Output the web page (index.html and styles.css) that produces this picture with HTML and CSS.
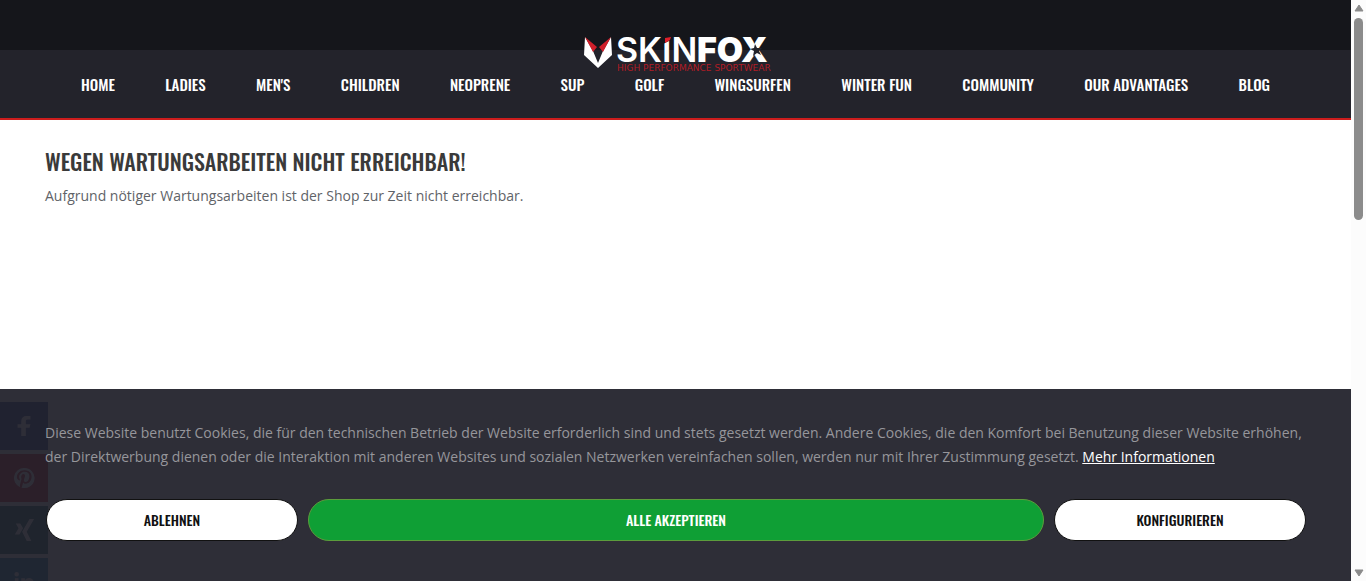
FILE: index.html
```html
<!DOCTYPE html>
<html lang="de">
<head>
<meta charset="utf-8">
<meta name="viewport" content="width=device-width, initial-scale=1">
<title>Skinfox</title>
<link rel="stylesheet" href="styles.css">
</head>
<body>
<div class="viewport">
  <div class="page">
    <header class="header">
      <div class="topbar"></div>
      <a class="logo" href="#" aria-label="Skinfox">
        <svg width="190" height="40" viewBox="0 0 190 40">
          <path fill="#fff" d="M2 3 10 17 15 29 20 17 28 3 29 21 15 34 1 21Z"/>
          <path fill="#cf1f2a" d="M2 3 14 13 10 18Z M28 3 16 13 20 18Z"/>
          <text class="logo-skin" x="33" y="28">SKIN</text>
          <text class="logo-fox" x="114" y="28">FOX</text>
          <path fill="#15161b" d="M80 2h8v4l-8 4Z"/>
          <path fill="#e01f2a" d="M82 4 88 3 87 6 82 9Z"/>
          <path fill="#23232b" d="m172 10 2 4 5 0-3 3 2 4-4-2-4 3 1-5-4-2 4-1Z"/>
          <text class="logo-tag" x="34" y="37">HIGH PERFORMANCE SPORTWEAR</text>
        </svg>
      </a>
      <nav class="nav">
        <a href="#">Home</a><a href="#">Ladies</a><a href="#">Men's</a><a href="#">Children</a><a href="#">Neoprene</a><a href="#">SUP</a><a href="#">Golf</a><a href="#">Wingsurfen</a><a href="#">Winter Fun</a><a href="#">Community</a><a href="#">Our Advantages</a><a href="#">Blog</a>
      </nav>
    </header>
    <main class="content">
      <h1>Wegen Wartungsarbeiten nicht erreichbar!</h1>
      <p>Aufgrund nötiger Wartungsarbeiten ist der Shop zur Zeit nicht erreichbar.</p>
    </main>
    <div class="bottom">
      <div class="social">
        <a class="facebook" href="#" aria-label="Facebook"><svg viewBox="0 0 24 24"><path d="M9 23V14H5v-4h4V7c0-4 2-6 6-6h4v4h-3c-2 0-2 1-2 2v3h5l-1 4h-4v9Z"/></svg></a>
        <a class="pinterest" href="#" aria-label="Pinterest"><svg viewBox="0 0 24 24"><path fill-rule="evenodd" d="M12 1a11 11 0 0 0-4.500 21c0-1 0-2 .2-3l1.600-6s-.4-1-.4-2c0-2 1-3.500 2.500-3.500 1.200 0 1.700.9 1.700 2 0 1.200-.8 2.800-1.200 4.500-.3 1.300.7 2.400 2 2.400 2.400 0 4-3 4-6.500 0-2.700-1.900-4.700-5.100-4.700-3.800 0-6.100 2.800-6.100 5.800 0 1 .3 1.800.8 2.400l-.4 1.500C5 14 4.200 12.500 4.200 11c0-3.500 2.900-7.500 8.600-7.500 4.500 0 7.500 3.200 7.500 6.700 0 4.700-2.600 8.100-6.400 8.100-1.300 0-2.500-.7-2.900-1.500-.6 2.500-1 4.400-1.700 5.700A11 11 0 1 0 12 1Z"/></svg></a>
        <a class="xing" href="#" aria-label="Xing"><svg viewBox="0 0 24 24"><path d="M18 0h5l-8 14 5 10h-5l-5-10ZM3 5h5l3 5-4 7H2l4-7Z"/></svg></a>
        <a class="linkedin" href="#" aria-label="LinkedIn"><svg viewBox="0 0 24 24"><path d="M2 8h4v14H2ZM4 1a2.500 2.500 0 1 1 0 5 2.500 2.500 0 0 1 0-5ZM9 8h4v2c3-4 10-3 10 4v8h-4v-8c0-4-6-4-6 0v8H9Z"/></svg></a>
      </div>
      <section class="cookies" aria-label="Cookies">
        <p>Diese Website benutzt Cookies, die für den technischen Betrieb der Website erforderlich sind und stets gesetzt werden. Andere Cookies, die den Komfort bei Benutzung dieser Website erhöhen, der Direktwerbung dienen oder die Interaktion mit anderen Websites und sozialen Netzwerken vereinfachen sollen, werden nur mit Ihrer Zustimmung gesetzt. <a href="#">Mehr Informationen</a></p>
        <div class="actions">
          <button type="button">Ablehnen</button>
          <button type="button" class="accept">Alle akzeptieren</button>
          <button type="button">Konfigurieren</button>
        </div>
      </section>
    </div>
  </div>
  <div class="scrollbar" aria-hidden="true">
    <svg width="10" height="8" viewBox="0 0 10 8"><path d="M5 1 9 7H1Z"/></svg>
    <div class="track"><div class="thumb"></div></div>
    <svg width="10" height="8" viewBox="0 0 10 8"><path d="M5 7 1 1h8Z"/></svg>
  </div>
</div>
</body>
</html>
```
FILE: styles.css
```css
* { box-sizing: border-box; }
body {
  margin: 0;
  background: #fff;
  color: #5f6368;
  font: 14px/24px "Open Sans", "Noto Sans", sans-serif;
}
h1, p { margin: 0; }
.viewport { display: flex; height: 100vh; overflow: hidden; }
.page { flex: 1; min-width: 0; display: flex; flex-direction: column; }

.header { position: relative; background: #23232b; border-bottom: 2px solid #cc1d1d; }
.topbar { height: 50px; background: #15161b; }
.logo { position: absolute; top: 34px; left: 50%; margin-left: -93px; }
.logo svg { display: block; overflow: visible; }
.logo text { fill: #fff; font-family: Inter, sans-serif; font-size: 34px; }
.logo .logo-skin { font-weight: 600; }
.logo .logo-fox { font-weight: 900; }
.logo .logo-tag { fill: #b01c26; font-family: "DejaVu Sans", sans-serif; font-size: 9px; }
.nav {
  display: flex;
  justify-content: space-between;
  padding: 22px 81px;
}
.nav a {
  color: #fff;
  font: 500 15px/24px Oswald, "Liberation Sans Narrow", "Liberation Sans", sans-serif;
  text-decoration: none;
  text-transform: uppercase;
  white-space: nowrap;
}

.content { flex: 1; padding: 27px 45px; }
.content h1 {
  margin-bottom: 9px;
  color: #3a3a3a;
  font: 500 22px/28px Oswald, "Liberation Sans Narrow", "Liberation Sans", sans-serif;
  text-transform: uppercase;
}

.bottom { position: relative; }
.social {
  position: absolute;
  top: 13px;
  bottom: 0;
  left: 0;
  display: flex;
  flex-direction: column;
  gap: 4px;
  width: 48px;
  overflow: hidden;
}
.social a {
  flex: none;
  display: flex;
  align-items: center;
  justify-content: center;
  height: 48px;
}
.social svg { width: 22px; fill: #fff; }
.facebook { background: #1b3a88; }
.pinterest { background: #c00010; }
.xing { background: #005055; }
.linkedin { background: #0070a0; }

.cookies {
  position: relative;
  padding: 32px 45px 40px;
  background: rgba(33, 33, 42, 0.94);
  color: #96969b;
}
.cookies a { color: #fff; }
.actions {
  display: grid;
  grid-template-columns: 252px 1fr 252px;
  gap: 10px;
  margin: 30px 0 0 1px;
}
.actions button {
  height: 42px;
  padding: 0 16px;
  border: 1px solid #111;
  border-radius: 21px;
  background: #fff;
  color: #111;
  font: 500 14px/20px Oswald, "Liberation Sans Narrow", "Liberation Sans", sans-serif;
  text-transform: uppercase;
}
.actions .accept { border-color: #5c9c3c; background: #0f9f35; color: #fff; }

.scrollbar {
  display: flex;
  flex-direction: column;
  align-items: center;
  gap: 6px;
  width: 15px;
  padding: 4px 0;
  background: #fcfcfc;
}
.scrollbar svg { flex: none; fill: #8b8b8b; stroke: #8b8b8b; stroke-linejoin: round; }
.track { flex: 1; }
.thumb { width: 9px; height: 37%; border-radius: 5px; background: #8b8b8b; }
```
